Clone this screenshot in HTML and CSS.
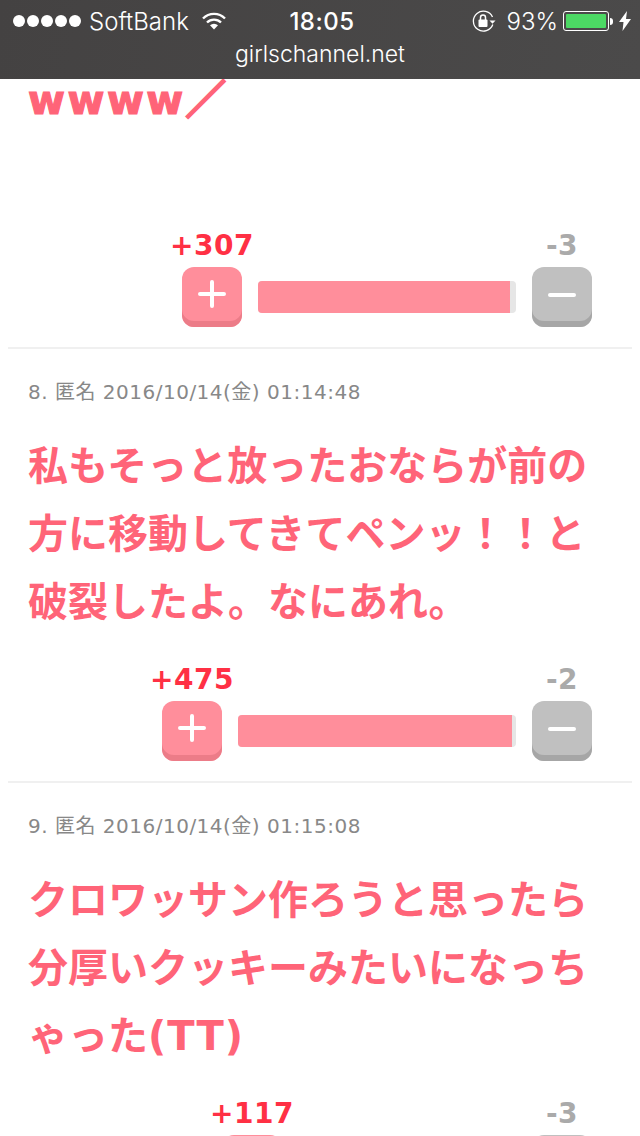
FILE: index.html
```html
<!DOCTYPE html>
<html lang="ja">
<head>
<meta charset="UTF-8">
<meta name="viewport" content="width=device-width, initial-scale=1.0">
<title>girlschannel.net</title>
<link rel="stylesheet" href="styles.css">
</head>
<body>
    <header class="browser-bar">
        <div class="status-row">
            <div class="status-left">
                <span class="signal"><i></i><i></i><i></i><i></i><i></i></span>
                <span>SoftBank</span>
                <svg class="wifi" width="24" height="18" viewBox="0 0 24 18">
                    <path d="M1 6.5a15.5 15.5 0 0 1 22 0" fill="none" stroke="#fff" stroke-width="2.4"/>
                    <path d="M5 10.5a10 10 0 0 1 14 0" fill="none" stroke="#fff" stroke-width="2.4"/>
                    <path d="M8 13.2a6 6 0 0 1 8 0L12 17.5z" fill="#fff"/>
                </svg>
            </div>
            <div class="status-time">18:05</div>
            <div class="status-right">
                <svg class="lock" width="24" height="22" viewBox="0 0 24 22">
                    <path d="M20.5 7A10 10 0 1 0 20.8 14.5" fill="none" stroke="#fff" stroke-width="1.3"/>
                    <path d="M17.5 10.5h6l-3 3.2z" fill="#fff"/>
                    <rect x="6.5" y="9.5" width="9" height="7.5" rx="1" fill="#fff"/>
                    <path d="M8.5 10V7.5a2.5 2.5 0 0 1 5 0V10" fill="none" stroke="#fff" stroke-width="1.5"/>
                </svg>
                <span class="percent">93%</span>
                <div class="battery"><div class="battery-level"></div></div>
                <div class="battery-nub"></div>
                <svg class="bolt" width="12" height="20" viewBox="0 0 12 20">
                    <path d="M8 0L0 11h4.5L3.5 20 12 8H7z" fill="#fff"/>
                </svg>
            </div>
        </div>
        <div class="url">girlschannel.net</div>
    </header>

    <main class="comments">
        <article class="comment first">
            <p class="comment-body"><span class="wide">wwww</span><span class="slash">／</span><br><br></p>
            <div class="votes">
                <div class="vote-col">
                    <span class="count count-plus">+307</span>
                    <button class="btn btn-plus"><svg width="32" height="32" viewBox="0 0 32 32"><path d="M16 4v24M4 16h24" stroke="#fff" stroke-width="4" stroke-linecap="round"/></svg></button>
                </div>
                <div class="bar" style="width: 258px"><div class="bar-fill" style="width: 97.7%"></div></div>
                <div class="vote-col">
                    <span class="count count-minus">-3</span>
                    <button class="btn btn-minus"><svg width="32" height="32" viewBox="0 0 32 32"><path d="M4 17h24" stroke="#fff" stroke-width="4" stroke-linecap="round"/></svg></button>
                </div>
            </div>
        </article>

        <article class="comment">
            <div class="comment-meta">8. 匿名 2016/10/14(金) 01:14:48</div>
            <p class="comment-body">私もそっと放ったおならが前の方に移動してきてペンッ！！と破裂したよ。なにあれ。</p>
            <div class="votes">
                <div class="vote-col">
                    <span class="count count-plus">+475</span>
                    <button class="btn btn-plus"><svg width="32" height="32" viewBox="0 0 32 32"><path d="M16 4v24M4 16h24" stroke="#fff" stroke-width="4" stroke-linecap="round"/></svg></button>
                </div>
                <div class="bar" style="width: 278px"><div class="bar-fill" style="width: 98.4%"></div></div>
                <div class="vote-col">
                    <span class="count count-minus">-2</span>
                    <button class="btn btn-minus"><svg width="32" height="32" viewBox="0 0 32 32"><path d="M4 17h24" stroke="#fff" stroke-width="4" stroke-linecap="round"/></svg></button>
                </div>
            </div>
        </article>

        <article class="comment">
            <div class="comment-meta">9. 匿名 2016/10/14(金) 01:15:08</div>
            <p class="comment-body">クロワッサン作ろうと思ったら分厚いクッキーみたいになっちゃった<span class="latin">(TT)</span></p>
            <div class="votes">
                <div class="vote-col">
                    <span class="count count-plus">+117</span>
                    <button class="btn btn-plus"><svg width="32" height="32" viewBox="0 0 32 32"><path d="M16 4v24M4 16h24" stroke="#fff" stroke-width="4" stroke-linecap="round"/></svg></button>
                </div>
                <div class="bar" style="width: 218px"><div class="bar-fill" style="width: 97%"></div></div>
                <div class="vote-col">
                    <span class="count count-minus">-3</span>
                    <button class="btn btn-minus"><svg width="32" height="32" viewBox="0 0 32 32"><path d="M4 17h24" stroke="#fff" stroke-width="4" stroke-linecap="round"/></svg></button>
                </div>
            </div>
        </article>
    </main>
</body>
</html>
```

FILE: styles.css
```css
html, body {
    margin: 0;
    padding: 0;
    height: 1136px;
    overflow: hidden;
    background-color: #fff;
}

body {
    font-family: "DejaVu Sans", "Noto Sans CJK JP", sans-serif;
}

/* Barra del browser, sta sopra il contenuto */
.browser-bar {
    position: absolute;
    top: 0;
    left: 0;
    right: 0;
    z-index: 10;
    height: 79px;
    background: linear-gradient(100deg, #444242, #4b4a4a);
    color: #fff;
    font-family: "Inter", "Liberation Sans", sans-serif;
}

.status-row {
    display: grid;
    grid-template-columns: 1fr auto 1fr;
    align-items: center;
    height: 42px;
    padding: 0 9px 0 13px;
    font-size: 24px;
    font-weight: 300;
}

.status-left, .status-right {
    display: flex;
    align-items: center;
}

.status-right {
    justify-content: flex-end;
}

.signal {
    display: flex;
    gap: 2px;
    margin-right: 8px;
}

.signal i {
    width: 12px;
    height: 12px;
    border-radius: 50%;
    background-color: #fff;
}

.wifi {
    margin-left: 13px;
}

.status-time {
    font-weight: 500;
    letter-spacing: 0.5px;
}

.percent {
    margin: 0 5px 0 11px;
}

.battery {
    box-sizing: border-box;
    width: 46px;
    height: 20px;
    padding: 2px;
    border: 1px solid #fff;
    border-radius: 3px;
}

.battery-level {
    width: 40px;
    height: 100%;
    background-color: #4cd964;
    border-radius: 1px;
}

.battery-nub {
    width: 3px;
    height: 7px;
    margin-left: 1px;
    background-color: #fff;
    border-radius: 0 3px 3px 0;
}

.bolt {
    margin-left: 6px;
}

.url {
    text-align: center;
    font-size: 23px;
    font-weight: 300;
    line-height: 24px;
}

/* Commenti */
.comments {
    padding-top: 66px;
}

.comment {
    margin: 0 8px;
    padding: 0 20px;
    border-bottom: 2px solid #f0f0f0;
}

.comment-meta {
    padding-top: 31px;
    font-size: 20px;
    line-height: 24px;
    letter-spacing: 0.5px;
    color: #888;
}

.comment-body {
    margin: 28px 0 0;
    font-family: "DejaVu Sans", "Noto Sans CJK JP", sans-serif;
    font-size: 40px;
    font-weight: 700;
    line-height: 68px;
    color: #ff6478;
}

/* Le w nel riferimento sono piu larghe e piu piene */
.wide {
    letter-spacing: 2.5px;
    -webkit-text-stroke: 1.2px #ff6478;
}

.latin {
    letter-spacing: 1px;
}

.slash {
    -webkit-text-stroke: 2.5px #ff6478;
}

.first .comment-body {
    margin-top: 0;
}

.votes {
    display: flex;
    justify-content: flex-end;
    align-items: flex-start;
    gap: 16px;
    height: 145px;
    box-sizing: border-box;
    padding: 27px 20px 0 0;
}

.vote-col {
    display: flex;
    flex-direction: column;
    align-items: center;
    width: 60px;
}

.count {
    margin: 0 -20px 4px;
    font-size: 28px;
    font-weight: 700;
    line-height: 34px;
    letter-spacing: 0.5px;
    white-space: nowrap;
}

.count-plus {
    color: #ff3044;
}

.count-minus {
    color: #aaa;
}

.btn {
    display: flex;
    align-items: center;
    justify-content: center;
    width: 60px;
    height: 60px;
    padding: 0 0 6px;
    border: none;
    border-radius: 12px;
}

.btn-plus {
    background-color: #ff8e9b;
    box-shadow: inset 0 -6px 0 #ec7c88;
}

.btn-minus {
    background-color: #c0c0c0;
    box-shadow: inset 0 -6px 0 #a6a6a6;
}

.bar {
    height: 32px;
    margin-top: 52px;
    background-color: #e6e6e6;
    border-radius: 4px;
    overflow: hidden;
}

.bar-fill {
    height: 100%;
    background-color: #ff8e9b;
}
```
